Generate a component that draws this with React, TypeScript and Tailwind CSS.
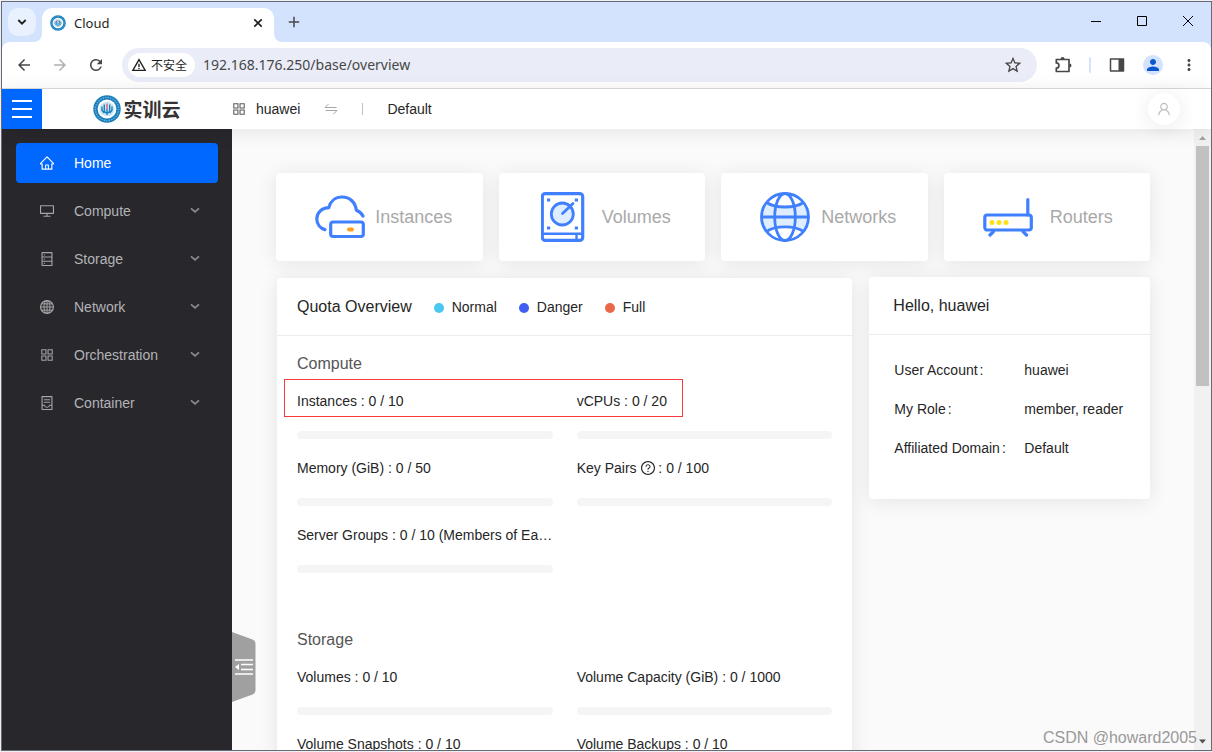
import React from "react";
import {
  AiOutlineAppstore,
  AiOutlineContainer,
  AiOutlineDatabase,
  AiOutlineDesktop,
  AiOutlineHome,
  AiOutlineQuestionCircle,
  AiOutlineUser,
} from "react-icons/ai";
import {
  MdAdd,
  MdArrowBack,
  MdArrowForward,
  MdMoreVert,
  MdPerson,
  MdRefresh,
  MdStarBorder,
  MdWarningAmber,
} from "react-icons/md";

function Emblem({ className }: { className: string }) {
  return (
    <svg viewBox="0 0 28 28" className={className} aria-hidden="true">
      <circle cx="14" cy="14" r="13.7" fill="#1b7fbd" />
      <circle cx="14" cy="14" r="11.6" fill="none" stroke="#7fbbe0" strokeWidth="1.2" strokeDasharray="1.2 1.3" />
      <circle cx="14" cy="14" r="9.4" fill="#fff" />
      <circle cx="14" cy="14" r="7.6" fill="#cfe7f5" />
      <path
        d="M11.3 9.6v6.600l2 2M9 11.400v3.800l2.200 3M16.700 9.600v6.600l-2 2M19 11.400v3.800l-2.200 3M14 14v6"
        fill="none"
        stroke="#1a80c0"
        strokeWidth="1.400"
      />
      <path d="M14 8.500v6" stroke="#d8566b" strokeWidth="1.300" />
    </svg>
  );
}

function GlobeLineIcon() {
  return (
    <svg viewBox="0 0 16 16" className="size-4" fill="none" stroke="currentColor" aria-hidden="true">
      <circle cx="8" cy="8" r="6.400" strokeWidth="1.200" />
      <ellipse cx="8" cy="8" rx="3" ry="6.400" />
      <path d="M1.600 8h12.800M8 1.600v12.800M2.600 4.900h10.800M2.600 11.100h10.800" />
    </svg>
  );
}

function InstancesIcon() {
  return (
    <svg
      viewBox="-1 0 50 50"
      className="size-[50px] overflow-visible"
      fill="none"
      stroke="#4080ff"
      strokeWidth="3.200"
      aria-hidden="true"
    >
      <path
        d="M10 37.600A11.200 11.200 0 0 1 1.800 27C1.800 20.500 7.200 15.700 13.800 15.700C15.400 9.200 20.500 5 27 5C35 5 40.500 10.600 41.300 18.200C44.600 19.300 46.600 21.300 48 24"
        strokeLinecap="round"
        strokeLinejoin="round"
      />
      <rect x="15.700" y="30" width="32.600" height="14.500" rx="2.500" />
      <rect x="32" y="35.500" width="7" height="4" rx="2" fill="#ff9f1c" stroke="none" />
    </svg>
  );
}

function VolumesIcon() {
  return (
    <svg viewBox="3.500 0 50 50" className="size-[50px]" fill="none" stroke="#4080ff" strokeWidth="3.200" aria-hidden="true">
      <rect x="4.800" y="1.600" width="40.400" height="46.800" rx="3" />
      <path d="M4.700 41.700h40.600" strokeWidth="2.400" />
      <path d="M39 42v6" strokeWidth="2.400" />
      <circle cx="24.800" cy="22" r="11" fill="#deedff" strokeWidth="2.800" />
      <path d="M25 21.500L35.500 11.500" strokeLinecap="round" strokeWidth="2.800" />
      <path d="M9.500 8h3.200M37.300 8h3.200M9.500 36h3.200M37.300 36h3.200" strokeWidth="3.200" />
    </svg>
  );
}

function NetworksIcon() {
  return (
    <svg viewBox="0 0 50 50" className="size-[50px]" fill="none" stroke="#4080ff" strokeWidth="2.800" aria-hidden="true">
      <path d="M6.500 12Q25 18 43.500 12Q53 25 43.500 38Q25 31.500 6.500 38Q-3 25 6.500 12Z" fill="#deedff" stroke="none" />
      <circle cx="25" cy="25" r="23.500" />
      <ellipse cx="25" cy="25" rx="10.300" ry="23.500" />
      <path d="M1.400 25h47.200M6.500 10.500Q13 15 25 15T43.500 10.500M6.500 39.500Q13 34.800 25 34.800T43.500 39.500" />
    </svg>
  );
}

function RoutersIcon() {
  return (
    <svg
      viewBox="6 0 50 50"
      className="size-[50px] overflow-visible"
      fill="none"
      stroke="#4080ff"
      strokeWidth="3.200"
      aria-hidden="true"
    >
      <rect x="1.800" y="23" width="46.500" height="15" rx="2.500" />
      <path d="M44.800 23V7.500M10.500 39.500L7 43M40 39.500L43.500 43" strokeLinecap="round" />
      <g fill="#ffe11a" stroke="none">
        <circle cx="9" cy="30.500" r="2.500" />
        <circle cx="16" cy="30.500" r="2.500" />
        <circle cx="23" cy="30.500" r="2.500" />
      </g>
    </svg>
  );
}

function TabStrip() {
  return (
    <div className="flex h-10 shrink-0 items-start bg-[#d3e3fd] pl-1.5 text-[#1f1f1f]">
      <button aria-label="Search tabs" className="mt-1.5 flex size-7 items-center justify-center rounded-[10px] bg-[#e9f0fe]">
        <svg viewBox="0 0 10 10" className="size-2.5" fill="none" stroke="currentColor" strokeWidth="1.800" aria-hidden="true">
          <path d="M1.300 3L5 6.700L8.700 3" />
        </svg>
      </button>
      <div className="relative mt-1.5 ml-1.5 flex h-[34px] w-[232px] items-center rounded-t-[10px] bg-white pb-1 pl-2">
        <svg viewBox="0 0 8 8" className="absolute bottom-0 -left-2 size-2" aria-hidden="true">
          <path d="M8 0v8H0A8 8 0 0 0 8 0Z" fill="#fff" />
        </svg>
        <svg viewBox="0 0 8 8" className="absolute -right-2 bottom-0 size-2" aria-hidden="true">
          <path d="M0 0v8h8A8 8 0 0 1 0 0Z" fill="#fff" />
        </svg>
        <Emblem className="size-4" />
        <span className="ml-2 flex-1 font-['Noto_Sans',sans-serif] text-[13px]">Cloud</span>
        <button aria-label="Close tab" className="flex w-8 items-center justify-center">
          <svg viewBox="0 0 10 10" className="size-2.5" fill="none" stroke="currentColor" strokeWidth="1.700" aria-hidden="true">
            <path d="M1.300 1.300l7.400 7.400M8.700 1.300L1.300 8.700" />
          </svg>
        </button>
      </div>
      <button aria-label="New tab" className="mt-1.5 ml-1.5 flex size-7 items-center justify-center text-[#474747]">
        <MdAdd className="size-[18px]" />
      </button>
      <div className="flex-1" />
      <button aria-label="Minimize" className="flex h-10 w-[46px] items-center justify-center pb-0.5">
        <svg viewBox="0 0 10 10" className="size-2.5" stroke="#000" aria-hidden="true">
          <path d="M0 5.500h10" />
        </svg>
      </button>
      <button aria-label="Maximize" className="flex h-10 w-[46px] items-center justify-center pb-0.5">
        <svg viewBox="0 0 10 10" className="size-2.5" fill="none" stroke="#000" aria-hidden="true">
          <path d="M.5.5h9v9h-9z" />
        </svg>
      </button>
      <button aria-label="Close" className="flex h-10 w-[46px] items-center justify-center pb-0.5">
        <svg viewBox="0 0 10 10" className="size-2.5" fill="none" stroke="#000" aria-hidden="true">
          <path d="M0 0l10 10M10 0L0 10" />
        </svg>
      </button>
    </div>
  );
}

const toolButton = "flex h-9 w-9 shrink-0 items-center justify-center";

function Toolbar() {
  return (
    <div className="bg-[#d3e3fd]">
      <div className="flex h-[47px] items-center rounded-t-lg border-b border-[#dcdcdc] bg-white px-1 text-[#474747]">
        <button aria-label="Back" className={toolButton}>
          <MdArrowBack className="size-[18px]" />
        </button>
        <button aria-label="Forward" className={toolButton}>
          <MdArrowForward className="size-[18px] text-[#b0b0b0]" />
        </button>
        <button aria-label="Reload" className={toolButton}>
          <MdRefresh className="size-[18px]" />
        </button>
        <div className="ml-2 flex h-[34px] flex-1 items-center rounded-full bg-[#eaedf8] pl-1.5">
          <button className="flex h-6 items-center gap-1 rounded-full bg-white px-[3px] pr-2 text-xs text-[#1f1f1f]">
            <MdWarningAmber className="size-4" />
            <span className="font-['Noto_Sans_CJK_SC',sans-serif]">不安全</span>
          </button>
          <input
            aria-label="Address"
            defaultValue="192.168.176.250/base/overview"
            className="ml-2 min-w-0 flex-1 bg-transparent font-['Noto_Sans',sans-serif] text-sm outline-none"
          />
          <button aria-label="Bookmark this page" className="mr-1.5 flex size-9 items-center justify-center">
            <MdStarBorder className="size-5" />
          </button>
        </div>
        <button aria-label="Extensions" className={`${toolButton} ml-2`}>
          <svg viewBox="0 0 18 18" className="size-[18px]" aria-hidden="true">
            <path
              d="M2.300 3.500H15V7.500V15.500H2.300V12.200A2.600 2.600 0 0 0 2.300 6.900Z"
              fill="none"
              stroke="currentColor"
              strokeWidth="1.700"
              strokeLinejoin="round"
            />
            <path d="M6.600 3a2 2 0 0 1 4 0zM15.500 7.400a2 2 0 0 1 0 4z" fill="currentColor" />
          </svg>
        </button>
        <span className="mx-2 h-4 w-0.5 rounded-full bg-[#d3e3fd]" />
        <button aria-label="Side panel" className={toolButton}>
          <svg viewBox="0 0 16 16" className="size-4" aria-hidden="true">
            <path d="M1.500 2h13v12h-13z" fill="none" stroke="currentColor" strokeWidth="1.500" strokeLinejoin="round" />
            <path d="M9.500 2h5v12h-5z" fill="currentColor" />
          </svg>
        </button>
        <button aria-label="Profile" className={toolButton}>
          <span className="flex size-5 items-center justify-center rounded-full bg-[#d3e3fd]">
            <MdPerson className="size-[18px] text-[#0b57d0]" />
          </span>
        </button>
        <button aria-label="Menu" className={toolButton}>
          <MdMoreVert className="size-[18px]" />
        </button>
      </div>
    </div>
  );
}

function AppHeader() {
  return (
    <header className="relative z-20 flex h-10 shrink-0 items-center bg-white shadow-[0_2px_20px_rgba(0,0,0,0.09)]">
      <button aria-label="Toggle services" className="flex size-10 flex-col items-center justify-center gap-1.5 bg-[#0068ff]">
        <span className="h-0.5 w-5 bg-white" />
        <span className="h-0.5 w-5 bg-white" />
        <span className="h-0.5 w-5 bg-white" />
      </button>
      <a href="#home" className="flex w-[190px] items-center justify-center">
        <Emblem className="size-7" />
        <span className="ml-0.5 font-['Noto_Sans_CJK_SC',sans-serif] text-[19px] leading-7 font-bold text-[#333]">实训云</span>
      </a>
      <button className="flex items-center">
        <AiOutlineAppstore className="-mx-px size-4 text-[#595959]" />
        <span className="ml-2.5">huawei</span>
        <svg viewBox="0 0 14 14" className="ml-6 size-3.5 text-[#a6a6a6]" fill="none" stroke="currentColor" aria-hidden="true">
          <path d="M12.500 5.500H1L4.500 2M1.500 8.500H13L9.500 12" />
        </svg>
      </button>
      <span className="mx-6 h-3 w-px bg-[#bfbfbf]" />
      <button>Default</button>
      <button
        aria-label="Account"
        className="mr-[31px] ml-auto flex size-8 items-center justify-center rounded-full bg-white text-[#bfbfbf] shadow-[0_2px_20px_rgba(0,0,0,0.09)]"
      >
        <AiOutlineUser className="size-4" />
      </button>
    </header>
  );
}

const iconSize = "size-4";

const menu: { label: string; icon: React.ReactNode }[] = [
  { label: "Compute", icon: <AiOutlineDesktop className={iconSize} /> },
  { label: "Storage", icon: <AiOutlineDatabase className={iconSize} /> },
  { label: "Network", icon: <GlobeLineIcon /> },
  { label: "Orchestration", icon: <AiOutlineAppstore className={iconSize} /> },
  { label: "Container", icon: <AiOutlineContainer className={iconSize} /> },
];

function Sidebar() {
  return (
    <aside className="relative z-10 w-[230px] shrink-0 bg-[#27272c] p-3.5">
      <nav className="flex flex-col gap-2">
        <a href="#home" className="flex h-10 items-center rounded bg-[#0068ff] px-[23px] text-white">
          <AiOutlineHome className={iconSize} />
          <span className="ml-[19px]">Home</span>
        </a>
        {menu.map((m) => (
          <button key={m.label} className="flex h-10 items-center pr-[18px] pl-[23px] text-left text-[#b4b4b6]">
            <span className="opacity-90">{m.icon}</span>
            <span className="ml-[19px] flex-1">{m.label}</span>
            <svg viewBox="0 0 10 10" className="size-2.5" fill="none" stroke="#8a8a8d" strokeWidth="1.800" aria-hidden="true">
              <path d="M1 2.400L5 5.900L9 2.400" />
            </svg>
          </button>
        ))}
      </nav>
      <button aria-label="Collapse menu" className="absolute bottom-12 left-full h-[70px] w-6">
        <svg viewBox="0 0 24 70" className="h-[70px] w-6" aria-hidden="true">
          <path d="M0 0L20.500 7.600Q23.500 8.800 23.500 12V58Q23.500 61.200 20.500 62.400L0 70Z" fill="#a0a0a0" />
          <path d="M3 28h18M9 32.500h12M9 37.500h12M3 42h18" stroke="#fff" strokeWidth="1.600" />
          <path d="M3 35l4-3v6z" fill="#fff" />
        </svg>
      </button>
    </aside>
  );
}

const cardShadow = "rounded bg-white shadow-[0_2px_20px_rgba(0,0,0,0.09)]";

const resources = [
  { label: "Instances", icon: <InstancesIcon /> },
  { label: "Volumes", icon: <VolumesIcon /> },
  { label: "Networks", icon: <NetworksIcon /> },
  { label: "Routers", icon: <RoutersIcon /> },
];

const legend = [
  { label: "Normal", dot: "bg-[#4ac8f0]" },
  { label: "Danger", dot: "bg-[#405ef0]" },
  { label: "Full", dot: "bg-[#e8684a]" },
];

interface Quota {
  label: string;
  value: string;
  help?: boolean;
}

const sections: { title: string; quotas: Quota[] }[] = [
  {
    title: "Compute",
    quotas: [
      { label: "Instances", value: "0 / 10" },
      { label: "vCPUs", value: "0 / 20" },
      { label: "Memory (GiB)", value: "0 / 50" },
      { label: "Key Pairs", value: "0 / 100", help: true },
      { label: "Server Groups", value: "0 / 10 (Members of Each Group : 0 / 10)" },
    ],
  },
  {
    title: "Storage",
    quotas: [
      { label: "Volumes", value: "0 / 10" },
      { label: "Volume Capacity (GiB)", value: "0 / 1000" },
      { label: "Volume Snapshots", value: "0 / 10" },
      { label: "Volume Backups", value: "0 / 10" },
    ],
  },
];

function QuotaCard() {
  return (
    <div className="col-span-2 p-px">
      <section className={`relative ${cardShadow}`}>
        <div className="flex h-[58px] items-center gap-[22px] border-b border-[#ececec] px-5">
          <h2 className="text-base">Quota Overview</h2>
          {legend.map((l) => (
            <span key={l.label} className="flex items-center gap-2">
              <span className={`mt-0.5 size-2.5 rounded-full ${l.dot}`} />
              {l.label}
            </span>
          ))}
        </div>
        <div className="flex flex-col gap-[55px] px-5 pt-4 pb-10">
          {sections.map((s) => (
            <div key={s.title}>
              <h3 className="text-base leading-6 text-[#555]">{s.title}</h3>
              <div className="mt-3.5 grid grid-cols-2 gap-x-6 gap-y-[18px]">
                {s.quotas.map((q) => (
                  <div key={q.label} className="min-w-0">
                    <p className="truncate leading-[22px]">
                      {q.label}{" "}
                      {q.help && <AiOutlineQuestionCircle className="-mr-0.5 inline size-4 align-[-3px]" />}
                      {q.help ? " : " : ": "}
                      {q.value}
                    </p>
                    <div className="mt-[19px] h-2 rounded-full bg-[#f5f5f5]" />
                  </div>
                ))}
              </div>
            </div>
          ))}
        </div>
        <div className="pointer-events-none absolute top-[101px] left-[7px] h-[38px] w-[399px] border border-[#f83a3a]" />
      </section>
    </div>
  );
}

const profile = [
  { label: "User Account", value: "huawei" },
  { label: "My Role", value: "member, reader" },
  { label: "Affiliated Domain", value: "Default" },
];

function ProfileCard() {
  return (
    <section className={`self-start ${cardShadow}`}>
      <h2 className="flex h-[58px] items-center border-b border-[#ececec] px-6 text-base">Hello, huawei</h2>
      <dl className="flex flex-col gap-[17px] px-[25px] pt-6 pb-10 leading-[22px]">
        {profile.map((p) => (
          <div key={p.label} className="flex">
            <dt className="flex w-[130px] shrink-0 gap-0.5">
              {p.label}
              <span>:</span>
            </dt>
            <dd>{p.value}</dd>
          </div>
        ))}
      </dl>
    </section>
  );
}

function ScrollBar() {
  return (
    <div className="flex w-[17px] shrink-0 flex-col items-center bg-[#f1f1f1]" aria-hidden="true">
      <svg viewBox="0 0 17 17" className="size-[17px]">
        <path d="M5 11h7L8.500 7z" fill="#a3a3a3" />
      </svg>
      <div className="h-60 w-[13px] bg-[#c1c1c1]" />
      <svg viewBox="0 0 17 17" className="mt-auto size-[17px]">
        <path d="M5 6.500h7L8.500 10.500z" fill="#505050" />
      </svg>
    </div>
  );
}

export default function App() {
  return (
    <div className="h-screen bg-[#eef0f5] py-px pl-px">
      <div className="relative flex h-full flex-col overflow-hidden border border-[#666b73] bg-white font-['Liberation_Sans',Arial,sans-serif] text-sm text-[#262626]">
        <TabStrip />
        <Toolbar />
        <AppHeader />
        <div className="flex min-h-0 flex-1">
          <Sidebar />
          <main className="min-w-0 flex-1 overflow-hidden bg-[#fafafa] p-11">
            <div className="grid grid-cols-4 gap-4">
              {resources.map((r) => (
                <a
                  key={r.label}
                  href="#resource"
                  className={`flex h-[88px] items-center justify-center gap-[11px] pl-2 text-lg text-[#a9a9a9] ${cardShadow}`}
                >
                  {r.icon}
                  {r.label}
                </a>
              ))}
            </div>
            <div className="mt-4 grid grid-cols-3 gap-4">
              <QuotaCard />
              <ProfileCard />
            </div>
          </main>
          <ScrollBar />
        </div>
        <span className="pointer-events-none absolute right-3.5 bottom-0 z-30 text-base leading-6 text-[#999]">
          CSDN @howard2005
        </span>
      </div>
    </div>
  );
}
